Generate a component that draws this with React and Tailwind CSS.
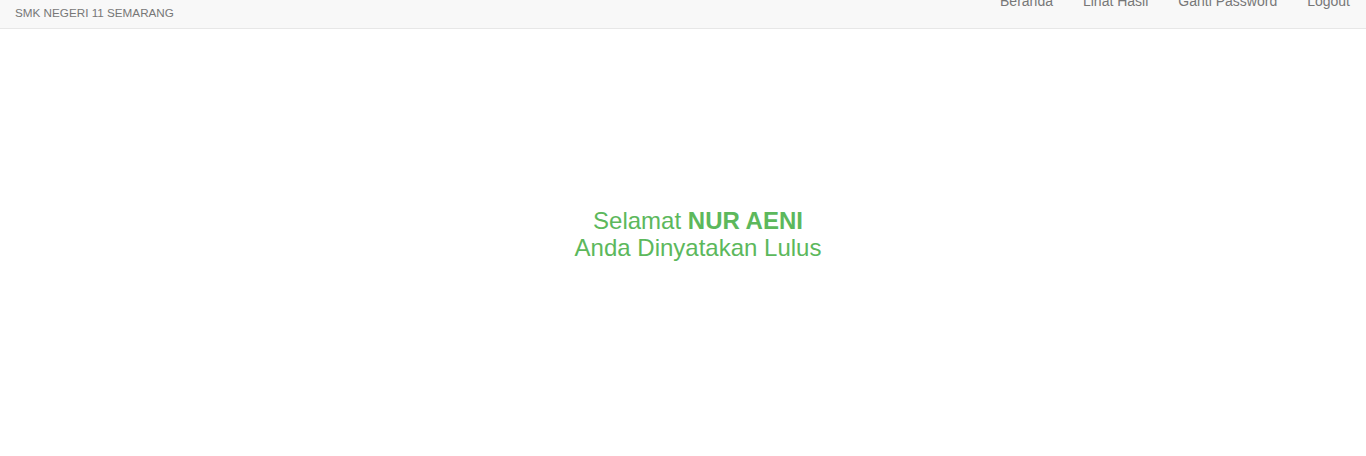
export default function App() {
  const links = ['Beranda', 'Lihat Hasil', 'Ganti Password', 'Logout']

  return (
    <div className="min-h-[456px] bg-white font-['Liberation_Sans',Arial,sans-serif] overflow-hidden">
      {/* Navbar (page is scrolled, top part cut off) */}
      <nav className="-mt-[22px] h-[51px] bg-[#f8f8f8] border-b border-[#e7e7e7] flex justify-between">
        <div className="pl-[15px] pt-[3px] flex flex-col">
          <span className="text-[18px] leading-[20px] text-[#eeeeee] pl-[185px]">PENGUMUMAN KELULUSAN</span>
          <span className="text-[11.7px] leading-[14px] text-[#777777] mt-[5px]">SMK NEGERI 11 SEMARANG</span>
        </div>
        <ul className="flex pr-[1px]">
          {links.map((l) => (
            <li key={l}>
              <a className="block px-[15px] pt-[13px] text-[14px] leading-[20px] text-[#777777]">{l}</a>
            </li>
          ))}
        </ul>
      </nav>

      {/* Content */}
      <div className="pt-[178px] pl-[30px] text-center text-[24px] leading-[27px] text-[#5cb85c]">
        <p>
          Selamat <b className="font-bold">NUR AENI</b>
        </p>
        <p>Anda Dinyatakan Lulus</p>
      </div>
    </div>
  )
}
